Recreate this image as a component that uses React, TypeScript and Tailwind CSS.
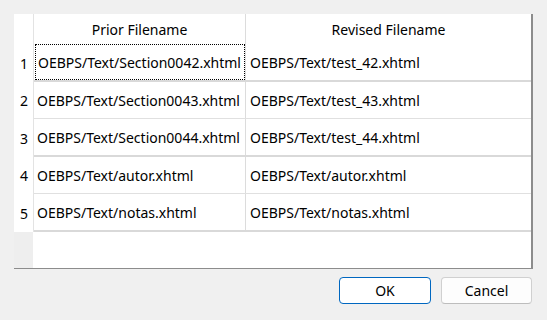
import React from "react";

const rows = [
  ["OEBPS/Text/Section0042.xhtml", "OEBPS/Text/test_42.xhtml"],
  ["OEBPS/Text/Section0043.xhtml", "OEBPS/Text/test_43.xhtml"],
  ["OEBPS/Text/Section0044.xhtml", "OEBPS/Text/test_44.xhtml"],
  ["OEBPS/Text/autor.xhtml", "OEBPS/Text/autor.xhtml"],
  ["OEBPS/Text/notas.xhtml", "OEBPS/Text/notas.xhtml"],
];

const rowClasses = [
  "h-[38px] border-b-2 border-[#d9d9d9]",
  "h-[37px] border-b border-[#e0e0e0]",
  "h-[38px] border-b-2 border-[#d9d9d9]",
  "h-[37px] border-b border-[#e0e0e0]",
  "h-[38px] border-b-2 border-[#d9d9d9]",
];

export default function App() {
  return (
    <div
      className="w-[547px] h-[320px] bg-[#f0f0f0] pt-[14px] pl-[14px] text-[14px] text-black"
      style={{ fontFamily: '"Noto Sans", "Open Sans", sans-serif' }}
    >
      <div className="w-[519px] h-[255px] bg-white border-r-2 border-b border-[#8c8c8c] flex flex-col">
        <div className="h-[30px] flex shrink-0">
          <div className="w-[20px] border-r border-[#e3e3e3]" />
          <div className="w-[212px] border-r border-[#dcdcdc] flex items-center justify-center">
            Prior Filename
          </div>
          <div className="flex-1 flex items-center justify-center">Revised Filename</div>
        </div>
        {rows.map((r, i) => (
          <div key={i} className="flex shrink-0">
            <div className="w-[20px] border-r border-[#e3e3e3] flex items-center justify-center pl-[1px]">
              {i + 1}
            </div>
            <div className={`flex-1 flex ${rowClasses[i]}`}>
              <div className="w-[212px] border-r border-[#dcdcdc] flex items-stretch">
                {i === 0 ? (
                  <div className="flex-1 ml-[1px] border border-dotted border-black flex items-center pl-[2px] whitespace-nowrap overflow-hidden">
                    {r[0]}
                  </div>
                ) : (
                  <div className="flex-1 flex items-center pl-[3px] whitespace-nowrap overflow-hidden">{r[0]}</div>
                )}
              </div>
              <div className="flex-1 flex items-center pl-[4px]">{r[1]}</div>
            </div>
          </div>
        ))}
        <div className="flex-1 flex">
          <div className="w-[19px] bg-[#eeeeee]" />
          <div className="flex-1" />
        </div>
      </div>
      <div className="w-[519px] flex justify-end gap-[10px] mt-[8px] pr-[1px]">
        <button className="w-[92px] h-[27px] rounded-[4px] border border-[#0067c0] bg-white flex items-center justify-center">
          OK
        </button>
        <button className="w-[91px] h-[27px] rounded-[4px] border border-[#d0d0d0] border-b-[#bdbdbd] bg-[#fdfdfd] flex items-center justify-center">
          Cancel
        </button>
      </div>
    </div>
  );
}
